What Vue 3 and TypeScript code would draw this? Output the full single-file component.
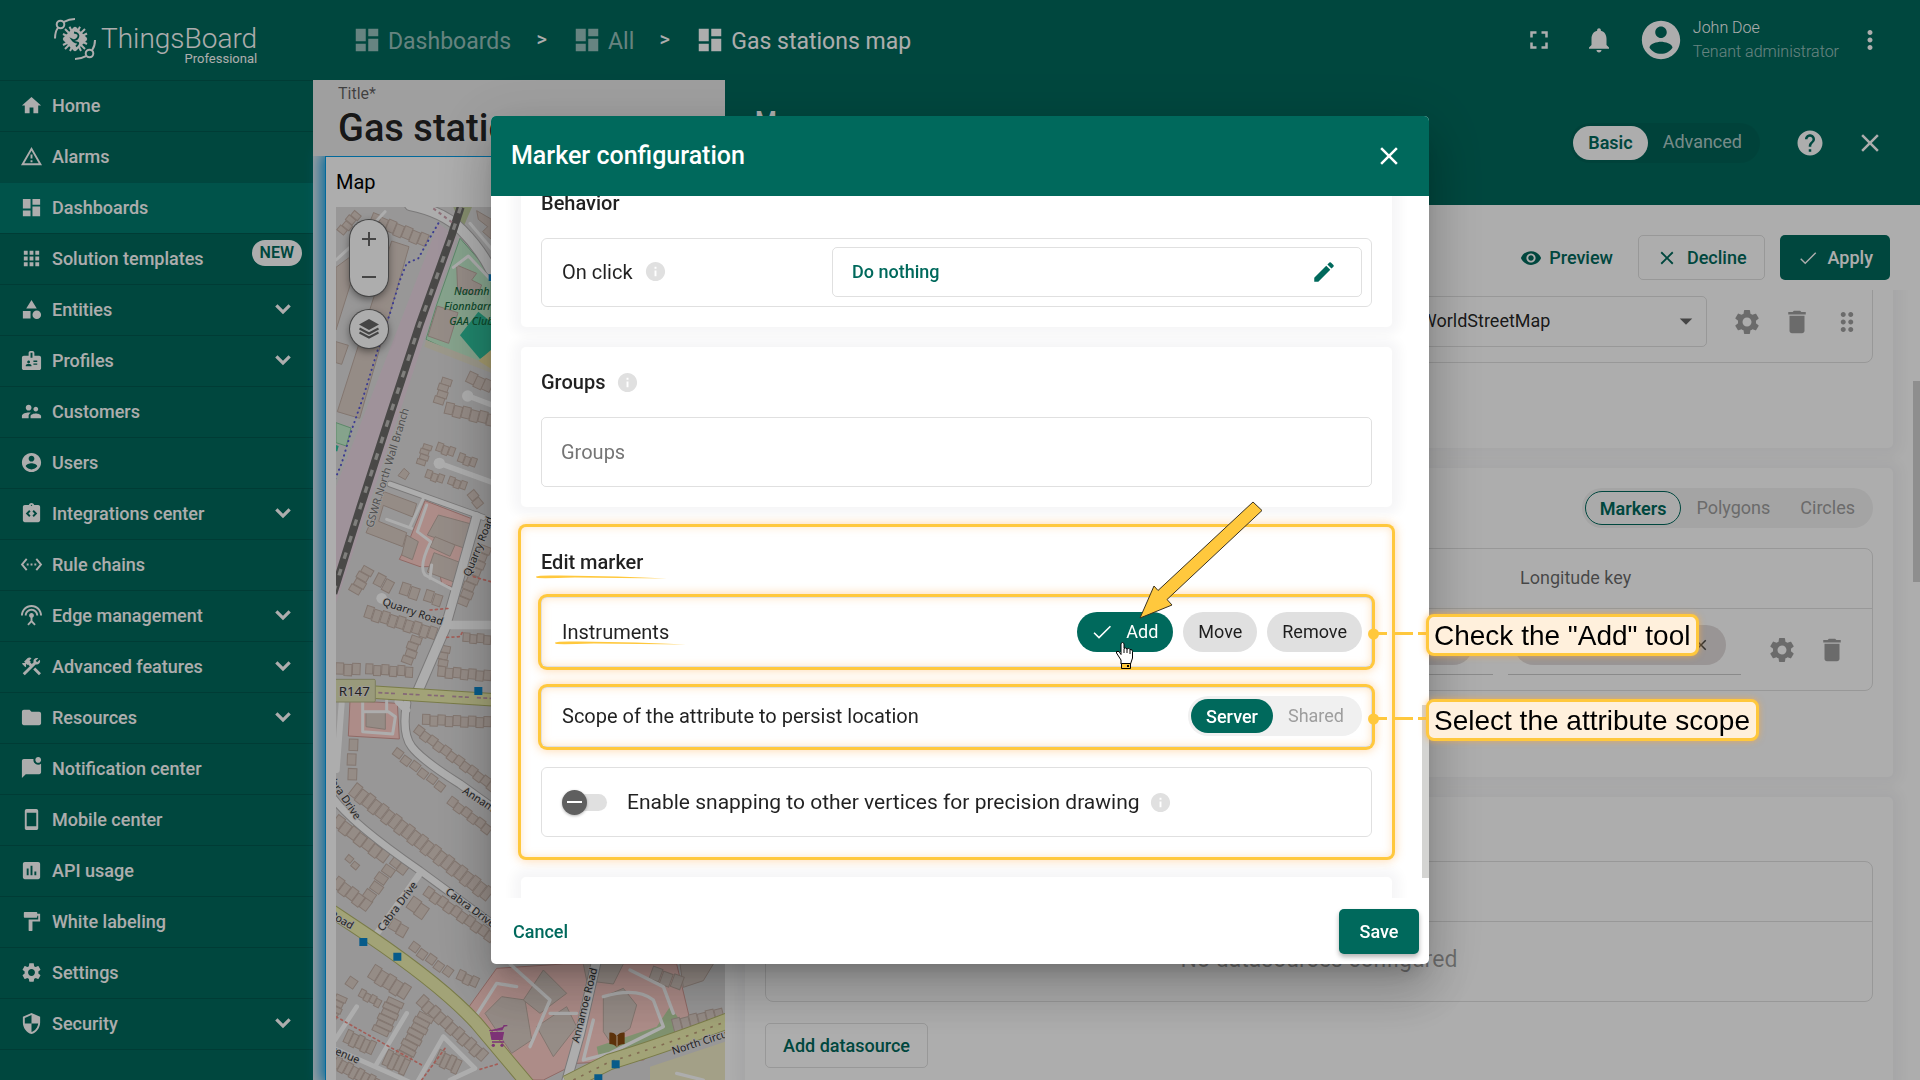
<script setup lang="ts">
import { ref } from 'vue'

interface MenuItem {
  label: string
  icon: string
  expandable?: boolean
  badge?: string
}

interface HouseRow {
  x: number
  y: number
  angle: number
  count: number
  w: number
  h: number
  gap: number
}

const icons: Record<string, string> = {
  home: 'M10 20v-6h4v6h5v-8h3L12 3 2 12h3v8z',
  alarm: 'M12 2L1 21h22L12 2zm0 3.99L19.53 19H4.47L12 5.99zM13 16h-2v2h2v-2zm0-6h-2v4h2v-4z',
  dashboard: 'M3 13h8V3H3v10zm0 8h8v-6H3v6zm10 0h8V11h-8v10zm0-18v6h8V3h-8z',
  apps: 'M4 8h4V4H4v4zm6 12h4v-4h-4v4zm-6 0h4v-4H4v4zm0-6h4v-4H4v4zm6 0h4v-4h-4v4zm6-10v4h4V4h-4zm-6 4h4V4h-4v4zm6 6h4v-4h-4v4zm0 6h4v-4h-4v4z',
  category: 'M12 2l-5.5 9h11zM17.5 13a4.5 4.5 0 1 0 0 9 4.5 4.5 0 0 0 0-9zM3 13.5h8v8H3z',
  badge: 'M20 7h-5V4c0-1.1-.9-2-2-2h-2c-1.1 0-2 .9-2 2v3H4c-1.1 0-2 .9-2 2v11c0 1.1.9 2 2 2h16c1.1 0 2-.9 2-2V9c0-1.1-.9-2-2-2zM9 12c.83 0 1.5.67 1.5 1.5S9.83 15 9 15s-1.5-.67-1.5-1.5S8.17 12 9 12zm3 6H6v-.75c0-1 2-1.5 3-1.5s3 .5 3 1.5V18zm1-9h-2V4h2v5zm5 7.5h-4V15h4v1.5zm0-3h-4V12h4v1.5z',
  customers: 'M16.5 12c1.38 0 2.49-1.12 2.49-2.5S17.88 7 16.5 7C15.12 7 14 8.12 14 9.5s1.12 2.5 2.5 2.5zM9 11c1.66 0 2.99-1.34 2.99-3S10.66 5 9 5C7.34 5 6 6.34 6 8s1.34 3 3 3zm7.5 3c-1.83 0-5.5.92-5.5 2.75V19h11v-2.25c0-1.83-3.67-2.75-5.5-2.75zM9 13c-2.33 0-7 1.17-7 3.5V19h7v-2.25c0-.85.33-2.34 2.37-3.47C10.5 13.1 9.66 13 9 13z',
  account: 'M12 2C6.48 2 2 6.48 2 12s4.48 10 10 10 10-4.48 10-10S17.52 2 12 2zm0 3c1.66 0 3 1.34 3 3s-1.34 3-3 3-3-1.34-3-3 1.34-3 3-3zm0 14.2c-2.5 0-4.71-1.28-6-3.22.03-1.99 4-3.08 6-3.08 1.99 0 5.97 1.09 6 3.08-1.29 1.94-3.5 3.22-6 3.22z',
  integrations: 'M19 3h-4.18C14.4 1.84 13.3 1 12 1s-2.4.84-2.82 2H5c-1.1 0-2 .9-2 2v14c0 1.1.9 2 2 2h14c1.1 0 2-.9 2-2V5c0-1.1-.9-2-2-2zm-8 11.17-1.41 1.42L6 12l3.59-3.59L11 9.83 8.83 12 11 14.17zm1-9.92c-.41 0-.75-.34-.75-.75s.34-.75.75-.75.75.34.75.75-.34.75-.75.75zm2.41 11.34L13 14.17 15.17 12 13 9.83l1.41-1.42L18 12l-3.59 3.59z',
  rules: 'M7.77 6.76L6.23 5.48.82 12l5.41 6.52 1.54-1.28L3.42 12l4.35-5.24zM7 13h2v-2H7v2zm10-2h-2v2h2v-2zm-6 2h2v-2h-2v2zm6.77-7.52l-1.54 1.28L20.58 12l-4.35 5.24 1.54 1.28L23.18 12l-5.41-6.52z',
  antenna: 'M12 5c-3.87 0-7 3.13-7 7h2c0-2.76 2.24-5 5-5s5 2.24 5 5h2c0-3.87-3.13-7-7-7zm1 9.29c.88-.39 1.5-1.26 1.5-2.29 0-1.38-1.12-2.5-2.5-2.5S9.5 10.62 9.5 12c0 1.02.62 1.9 1.5 2.29v3.3L7.59 21 9 22.41l3-3 3 3L16.41 21 13 17.59v-3.3zM12 1C5.93 1 1 5.93 1 12h2c0-4.97 4.03-9 9-9s9 4.03 9 9h2c0-6.07-4.93-11-11-11z',
  tools: 'M13.78 15.17l2.12-2.12 6 6-2.12 2.12zM17.5 10c1.93 0 3.5-1.57 3.5-3.5 0-.58-.16-1.12-.41-1.6l-2.7 2.7-1.49-1.49 2.7-2.7c-.48-.25-1.02-.41-1.6-.41C15.57 3 14 4.57 14 6.5c0 .41.08.8.21 1.16l-1.85 1.85-1.78-1.78.71-.71-1.41-1.41L12 3.49c-1.17-1.17-3.07-1.17-4.24 0L4.22 7.03l1.41 1.41H2.81l-.71.71 3.54 3.54.71-.71V9.15l1.41 1.41.71-.71 1.78 1.78-7.41 7.41 2.12 2.12L16.34 9.79c.36.13.75.21 1.16.21z',
  folder: 'M10 4H4c-1.1 0-1.99.9-1.99 2L2 18c0 1.1.9 2 2 2h16c1.1 0 2-.9 2-2V8c0-1.1-.9-2-2-2h-8l-2-2z',
  notification: 'M22 6.98V16c0 1.1-.9 2-2 2H6l-4 4V4c0-1.1.9-2 2-2h10.1c-.06.32-.1.66-.1 1 0 2.76 2.24 5 5 5 1.13 0 2.16-.39 3-1.02zM16 3c0 1.66 1.34 3 3 3s3-1.34 3-3-1.34-3-3-3-3 1.34-3 3z',
  mobile: 'M17 1.01L7 1c-1.1 0-1.99.9-1.99 2v18c0 1.1.89 2 1.99 2h10c1.1 0 2-.9 2-2V3c0-1.1-.9-1.99-2-1.99zM17 19H7V5h10v14z',
  chart: 'M19 3H5c-1.1 0-2 .9-2 2v14c0 1.1.9 2 2 2h14c1.1 0 2-.9 2-2V5c0-1.1-.9-2-2-2zM9 17H7v-7h2v7zm4 0h-2V7h2v10zm4 0h-2v-4h2v4z',
  paint: 'M18 4V3c0-.55-.45-1-1-1H5c-.55 0-1 .45-1 1v4c0 .55.45 1 1 1h12c.55 0 1-.45 1-1V6h1v4H9v11c0 .55.45 1 1 1h2c.55 0 1-.45 1-1v-9h8V4h-3z',
  settings: 'M19.14 12.94c.04-.3.06-.61.06-.94 0-.32-.02-.64-.07-.94l2.03-1.58c.18-.14.23-.41.12-.61l-1.92-3.32c-.12-.22-.37-.29-.59-.22l-2.39.96c-.5-.38-1.03-.7-1.62-.94l-.36-2.54c-.04-.24-.24-.41-.48-.41h-3.84c-.24 0-.43.17-.47.41l-.36 2.54c-.59.24-1.13.57-1.62.94l-2.39-.96c-.22-.08-.47 0-.59.22L2.74 8.87c-.12.21-.08.47.12.61l2.03 1.58c-.05.3-.09.63-.09.94s.02.64.07.94l-2.03 1.58c-.18.14-.23.41-.12.61l1.92 3.32c.12.22.37.29.59.22l2.39-.96c.5.38 1.03.7 1.62.94l.36 2.54c.05.24.24.41.48.41h3.84c.24 0 .44-.17.47-.41l.36-2.54c.59-.24 1.13-.56 1.62-.94l2.39.96c.22.08.47 0 .59-.22l1.92-3.32c.12-.22.07-.47-.12-.61l-2.01-1.58zM12 15.6c-1.98 0-3.6-1.62-3.6-3.6s1.62-3.6 3.6-3.6 3.6 1.62 3.6 3.6-1.62 3.6-3.6 3.6z',
  shield: 'M12 1L3 5v6c0 5.55 3.84 10.74 9 12 5.16-1.26 9-6.45 9-12V5l-9-4zm0 10.99h7c-.53 4.12-3.28 7.79-7 8.94V12H5V6.3l7-3.11v8.8z',
  fullscreen: 'M7 14H5v5h5v-2H7v-3zm-2-4h2V7h3V5H5v5zm12 7h-3v2h5v-5h-2v3zM14 5v2h3v3h2V5h-5z',
  bell: 'M12 22c1.1 0 2-.9 2-2h-4c0 1.1.89 2 2 2zm6-6v-5c0-3.07-1.64-5.64-4.5-6.32V4c0-.83-.67-1.5-1.5-1.5s-1.5.67-1.5 1.5v.68C7.63 5.36 6 7.92 6 11v5l-2 2v1h16v-1l-2-2z',
  more: 'M12 8c1.1 0 2-.9 2-2s-.9-2-2-2-2 .9-2 2 .9 2 2 2zm0 2c-1.1 0-2 .9-2 2s.9 2 2 2 2-.9 2-2-.9-2-2-2zm0 6c-1.1 0-2 .9-2 2s.9 2 2 2 2-.9 2-2-.9-2-2-2z',
  help: 'M12 2C6.48 2 2 6.48 2 12s4.48 10 10 10 10-4.48 10-10S17.52 2 12 2zm1 17h-2v-2h2v2zm2.07-7.75l-.9.92C13.45 12.9 13 13.5 13 15h-2v-.5c0-1.1.45-2.1 1.17-2.83l1.24-1.26c.37-.36.59-.86.59-1.41 0-1.1-.9-2-2-2s-2 .9-2 2H8c0-2.21 1.79-4 4-4s4 1.79 4 4c0 .88-.36 1.68-.93 2.25z',
  close: 'M19 6.41L17.59 5 12 10.59 6.41 5 5 6.41 10.59 12 5 17.59 6.41 19 12 13.41 17.59 19 19 17.59 13.41 12z',
  eye: 'M12 4.5C7 4.5 2.73 7.61 1 12c1.73 4.39 6 7.5 11 7.5s9.27-3.11 11-7.5c-1.73-4.39-6-7.5-11-7.5zM12 17c-2.76 0-5-2.24-5-5s2.24-5 5-5 5 2.24 5 5-2.24 5-5 5zm0-8c-1.66 0-3 1.34-3 3s1.34 3 3 3 3-1.34 3-3-1.34-3-3-3z',
  check: 'M9 16.6L4.6 12.2l-1.1 1.1L9 18.8 21 6.800l-1.100-1.100z',
  trash: 'M6 19c0 1.1.9 2 2 2h8c1.1 0 2-.9 2-2V7H6v12zM19 4h-3.5l-1-1h-5l-1 1H5v2h14V4z',
  drag: 'M11 18c0 1.1-.9 2-2 2s-2-.9-2-2 .9-2 2-2 2 .9 2 2zm-2-8c-1.1 0-2 .9-2 2s.9 2 2 2 2-.9 2-2-.9-2-2-2zm0-6c-1.1 0-2 .9-2 2s.9 2 2 2 2-.9 2-2-.9-2-2-2zm6 4c1.1 0 2-.9 2-2s-.9-2-2-2-2 .9-2 2 .9 2 2 2zm0 2c-1.1 0-2 .9-2 2s.9 2 2 2 2-.9 2-2-.9-2-2-2zm0 6c-1.1 0-2 .9-2 2s.9 2 2 2 2-.9 2-2-.9-2-2-2z',
  edit: 'M3 17.25V21h3.75L17.81 9.94l-3.75-3.75L3 17.25zM20.71 7.04a.996.996 0 0 0 0-1.41l-2.34-2.34a.996.996 0 0 0-1.41 0l-1.83 1.83 3.75 3.75 1.83-1.83z',
  info: 'M12 2C6.48 2 2 6.48 2 12s4.48 10 10 10 10-4.48 10-10S17.52 2 12 2zm1 15h-2v-6h2v6zm0-8h-2V7h2v2z',
  chevron: 'M3.5 9.2L6 6.7l6 6 6-6 2.5 2.5L12 17.7z',
  arrow: 'M7 10l5 5 5-5z',
}

const menu: MenuItem[] = [
  { label: 'Home', icon: 'home' },
  { label: 'Alarms', icon: 'alarm' },
  { label: 'Dashboards', icon: 'dashboard' },
  { label: 'Solution templates', icon: 'apps', badge: 'NEW' },
  { label: 'Entities', icon: 'category', expandable: true },
  { label: 'Profiles', icon: 'badge', expandable: true },
  { label: 'Customers', icon: 'customers' },
  { label: 'Users', icon: 'account' },
  { label: 'Integrations center', icon: 'integrations', expandable: true },
  { label: 'Rule chains', icon: 'rules' },
  { label: 'Edge management', icon: 'antenna', expandable: true },
  { label: 'Advanced features', icon: 'tools', expandable: true },
  { label: 'Resources', icon: 'folder', expandable: true },
  { label: 'Notification center', icon: 'notification' },
  { label: 'Mobile center', icon: 'mobile' },
  { label: 'API usage', icon: 'chart' },
  { label: 'White labeling', icon: 'paint' },
  { label: 'Settings', icon: 'settings' },
  { label: 'Security', icon: 'shield', expandable: true },
]

const crumbs = ['Dashboards', 'All', 'Gas stations map']
const current = 'Dashboards'

const title = ref('Gas stations map')
const layer = ref('Esri.WorldStreetMap')
const groups = ref('')
const mode = ref('Basic')
const overlay = ref('Markers')
const scope = ref('Server')
const tools = ref(['Add'])
const snapping = ref(false)

function toggleTool(tool: string) {
  tools.value = tools.value.includes(tool)
    ? tools.value.filter((t) => t !== tool)
    : [...tools.value, tool]
}

// Terraced houses along the streets of the map
const houseRows: HouseRow[] = [
  { x: 190, y: 100, angle: 22, count: 7, w: 24, h: 36, gap: 2 },
  { x: 82, y: 150, angle: -50, count: 4, w: 18, h: 26, gap: 2 },
  { x: 480, y: 575, angle: 25, count: 3, w: 26, h: 34, gap: 0 },
  { x: 425, y: 600, angle: 108, count: 4, w: 20, h: 30, gap: 0 },
  { x: 410, y: 668, angle: 14, count: 6, w: 24, h: 34, gap: 2 },
  { x: 385, y: 788, angle: 20, count: 3, w: 17, h: 26, gap: 2 },
  { x: 450, y: 820, angle: 20, count: 3, w: 17, h: 26, gap: 2 },
  { x: 365, y: 798, angle: 108, count: 4, w: 15, h: 26, gap: 1 },
  { x: 352, y: 870, angle: 20, count: 3, w: 17, h: 24, gap: 2 },
  { x: 420, y: 890, angle: 20, count: 3, w: 17, h: 24, gap: 2 },
  { x: 490, y: 930, angle: 50, count: 2, w: 24, h: 26, gap: 2 },
  { x: 190, y: 1172, angle: 120, count: 4, w: 20, h: 34, gap: 2 },
  { x: 205, y: 1180, angle: 28, count: 2, w: 26, h: 36, gap: 4 },
  { x: 278, y: 1208, angle: 18, count: 2, w: 26, h: 36, gap: 4 },
  { x: 350, y: 1230, angle: 18, count: 2, w: 24, h: 34, gap: 4 },
  { x: 172, y: 1278, angle: 18, count: 9, w: 22, h: 36, gap: 3 },
  { x: 543, y: 1105, angle: 112, count: 8, w: 22, h: 34, gap: 2 },
  { x: 335, y: 1375, angle: 110, count: 4, w: 20, h: 32, gap: 2 },
  { x: 78, y: 1450, angle: 2, count: 3, w: 23, h: 34, gap: 2 },
  { x: 168, y: 1453, angle: 3, count: 6, w: 21, h: 30, gap: 3 },
  { x: 385, y: 1460, angle: 5, count: 7, w: 22, h: 30, gap: 1 },
  { x: 420, y: 1400, angle: 100, count: 3, w: 20, h: 28, gap: 1 },
  { x: 460, y: 1360, angle: 4, count: 4, w: 20, h: 26, gap: 1 },
  { x: 338, y: 1605, angle: 2, count: 9, w: 22, h: 30, gap: 1 },
  { x: 325, y: 1636, angle: 37, count: 12, w: 24, h: 26, gap: 1 },
  { x: 142, y: 1678, angle: 92, count: 3, w: 34, h: 26, gap: 10 },
  { x: 260, y: 1704, angle: 37, count: 6, w: 26, h: 24, gap: 6 },
  { x: 425, y: 1850, angle: 37, count: 6, w: 24, h: 26, gap: 2 },
  { x: 140, y: 1810, angle: 38, count: 21, w: 22, h: 42, gap: 3 },
  { x: 85, y: 1905, angle: 37, count: 7, w: 26, h: 36, gap: 2 },
  { x: 255, y: 2028, angle: 37, count: 2, w: 26, h: 30, gap: 2 },
  { x: 85, y: 2090, angle: 37, count: 5, w: 24, h: 36, gap: 2 },
  { x: 255, y: 2070, angle: 125, count: 4, w: 26, h: 34, gap: 5 },
  { x: 115, y: 2025, angle: 40, count: 2, w: 20, h: 18, gap: 6 },
  { x: 310, y: 2150, angle: 35, count: 2, w: 30, h: 40, gap: 0 },
  { x: 355, y: 2120, angle: 35, count: 10, w: 23, h: 30, gap: 2 },
  { x: 250, y: 2215, angle: 30, count: 2, w: 26, h: 34, gap: 2 },
  { x: 310, y: 2285, angle: 36, count: 5, w: 25, h: 26, gap: 6 },
  { x: 450, y: 2370, angle: 25, count: 3, w: 20, h: 30, gap: 2 },
  { x: 195, y: 2355, angle: 32, count: 5, w: 24, h: 44, gap: 2 },
  { x: 340, y: 2445, angle: 42, count: 11, w: 22, h: 34, gap: 2 },
  { x: 120, y: 2390, angle: 35, count: 1, w: 28, h: 28, gap: 2 },
  { x: 155, y: 2428, angle: 28, count: 4, w: 16, h: 24, gap: 2 },
  { x: 280, y: 2470, angle: 115, count: 6, w: 17, h: 50, gap: 2 },
  { x: 370, y: 2515, angle: 118, count: 8, w: 17, h: 48, gap: 2 },
  { x: 115, y: 2550, angle: 25, count: 5, w: 17, h: 40, gap: 2 },
  { x: 82, y: 2630, angle: 28, count: 8, w: 17, h: 36, gap: 2 },
  { x: 235, y: 2610, angle: 25, count: 4, w: 17, h: 48, gap: 2 },
  { x: 390, y: 2610, angle: 25, count: 4, w: 17, h: 44, gap: 2 },
  { x: 110, y: 2455, angle: 115, count: 4, w: 16, h: 34, gap: 2 },
  { x: 1085, y: 2520, angle: -14, count: 6, w: 24, h: 44, gap: 2 },
  { x: 1030, y: 2360, angle: 20, count: 3, w: 30, h: 40, gap: 4 },
]

const houses = houseRows.flatMap((row) =>
  Array.from({ length: row.count }, (_, i) => ({
    key: `${row.x}-${row.y}-${i}`,
    x: i * (row.w + row.gap),
    y: i % 2 ? 2 : -2,
    w: row.w,
    h: row.h,
    transform: `translate(${row.x} ${row.y}) rotate(${row.angle})`,
  })),
)
</script>

<template>
  <div class="app">
    <header class="topbar">
      <a class="logo" href="#" aria-label="ThingsBoard Professional">
        <svg class="logo-mark" viewBox="0 0 42 42" fill="none" stroke="#fff" aria-hidden="true">
          <g class="outline-only" stroke-width="2">
            <circle cx="6.5" cy="6.5" r="3.8" />
            <path d="M10 3.8Q15 1 21 1M3.8 10Q1 14 1 20.500" />
            <circle cx="35.500" cy="35.500" r="3.8" />
            <path d="M32 38.200Q27 41 21 41M38.200 32Q41 28 41 22" />
          </g>
          <path stroke-width="2" d="M11 11l4 4M31 11l-4 4M11 31l4-4M31 31l-4-4M15.500 8.800l2 4M26 8.800l-2 4M33 15.500l-4 2M33 26l-4-2M9 16l4 2M9 27l4-2M16 33l2-4M27 33l-2-4" />
          <path stroke="none" d="M19.500 9.500q1.500-1.500 3 0l10 10q1.500 1.500 0 3l-10 10q-1.500 1.500-3 0l-10-10q-1.500-1.500 0-3z" />
          <path class="outline-only" stroke="#00695c" stroke-width="1.800" d="M20 14.500q6 1 4 5t-6 2q2 3 5 3t-1 4" />
        </svg>
        <span class="logo-text"><b>ThingsBoard</b><small>Professional</small></span>
      </a>
      <nav class="crumbs" aria-label="Breadcrumb">
        <template v-for="(crumb, i) in crumbs" :key="crumb">
          <a href="#" :class="['crumb', { last: i === crumbs.length - 1 }]">
            <svg class="i30" viewBox="0 0 24 24"><path :d="icons.dashboard" /></svg>
            <span>{{ crumb }}</span>
          </a>
          <span v-if="i < crumbs.length - 1" class="sep">&gt;</span>
        </template>
      </nav>
      <div class="top-actions">
        <button class="icon-btn" aria-label="Fullscreen"><svg class="i30" viewBox="0 0 24 24"><path :d="icons.fullscreen" /></svg></button>
        <button class="icon-btn" aria-label="Notifications"><svg class="i30" viewBox="0 0 24 24"><path :d="icons.bell" /></svg></button>
        <div class="user">
          <svg class="avatar" viewBox="0 0 24 24"><path :d="icons.account" /></svg>
          <div class="user-text"><span>John Doe</span><span class="role">Tenant administrator</span></div>
        </div>
        <button class="icon-btn" aria-label="Menu"><svg class="i30" viewBox="0 0 24 24"><path :d="icons.more" /></svg></button>
      </div>
    </header>

    <nav class="sidebar" aria-label="Main">
      <a v-for="item in menu" :key="item.label" href="#" :class="['item', { active: item.label === current }]">
        <svg class="item-icon" viewBox="0 0 24 24"><path :d="icons[item.icon]" /></svg>
        <span class="item-label">{{ item.label }}</span>
        <span v-if="item.badge" class="new">{{ item.badge }}</span>
        <svg v-if="item.expandable" class="item-chevron" viewBox="0 0 24 24"><path :d="icons.chevron" /></svg>
      </a>
    </nav>

    <main class="dashboard">
      <div class="title-bar">
        <label for="dash-title">Title*</label>
        <input id="dash-title" v-model="title" type="text" />
      </div>
      <section class="widget">
        <h2>Map</h2>
        <div class="map">
          <svg class="map-art" viewBox="78 81 1167 2619" preserveAspectRatio="xMinYMin slice" aria-hidden="true">
            <rect x="78" y="81" width="1167" height="2619" fill="#e0dfdf" />
            <path d="M385 130L440 170 335 500 78 1270V920L250 480z" fill="#ebd8e4" />
            <path d="M430 81h56l-30 70z" fill="#c3cfa0" />
            <path d="M450 175L543 280V572L348 478 380 375z" fill="#c5f0cf" stroke="#86c99a" stroke-width="3" />
            <path d="M348 480L543 556v22L343 500z" fill="#e5e0cc" />
            <path d="M505 395L543 425V515L510 537 450 466z" fill="#2fc49f" />
            <path d="M543 510l-38 32 38 24z" fill="#f0e2a0" />
            <path d="M78 728l45 16-14 54-31-10z" fill="#c5f0cf" stroke="#86c99a" stroke-width="3" />
            <path d="M78 795l8 3-4 16h-4z" fill="#2fc49f" />
            <g fill="#ffcfc9" stroke="#d59c96" stroke-width="3">
              <path d="M345 962L508 1025 440 1225 395 1210 385 1160 330 1160 268 1138 300 1075z" />
              <path d="M120 1562L262 1570 268 1677 115 1668z" />
              <path d="M470 2490L560 2365 760 2352H1100L1140 2520 1000 2640 800 2650 700 2700H640z" />
            </g>
            <g fill="#dccec6" stroke="#c1afa5" stroke-width="3">
              <path d="M245 183l52 17-148 515-67-20z" />
              <path d="M155 205L78 262V450z" />
              <path d="M78 485l37 11-20 57-17-5z" />
              <path d="M440 255l60 25-15 20 30 15-12 30-60-12z" />
              <path d="M382 378l62 20-28 92-62-22z" />
              <path d="M500 92l43 25v60l-25-22 15-15-28-22z" />
              <path d="M282 865l16 14-12 20-22-12z" />
              <path d="M222 935l98 36-12 40-88-35-14 48 84 34-12 42-110-42z" />
              <path d="M385 1005l110 30-25 72-118-42z" />
              <path d="M290 1065l35 20-18 54-32-14z" />
              <path d="M375 1070l60 25-15 34-60-28z" />
              <path d="M372 1118l80 30-20 58-80-30z" />
              <path d="M168 1598h58v50l-58-8z" />
              <path d="M525 2500l50-50 70 10 20 120-60 40z" />
              <path d="M700 2370l70 70-80 60-50-40z" />
              <path d="M680 2540l90-60 30 60-70 90z" />
              <path d="M880 2450l60-25 40 50-20 70-60 40-20-30z" />
              <path d="M820 2352h120l-30 60-80-10z" />
              <path d="M1110 2352h100l-30 50-60 20z" />
            </g>
            <path d="M1020 2660l225-75v115h-225z" fill="#f0ecc8" />
            <path d="M860 2600l180-60 40-60 30 40-30 60-210 70z" fill="#bcd8a4" />
            <g fill="#dccec6" stroke="#c1afa5" stroke-width="3">
              <rect v-for="h in houses" :key="h.key" :x="h.x" :y="h.y" :width="h.w" :height="h.h" :transform="h.transform" />
            </g>
            <g class="outline-only" stroke-linecap="round" stroke-linejoin="round">
              <g stroke="#b5b3b3">
                <path d="M300 75Q400 95 455 150T543 270" stroke-width="36" />
                <path d="M240 912L520 1012" stroke-width="20" />
                <path d="M500 1010L405 1345" stroke-width="32" />
                <path d="M405 1345L325 1530" stroke-width="34" />
                <path d="M290 1570Q275 1660 305 1700T450 1812L600 1920" stroke-width="28" />
                <path d="M60 1840Q110 1920 330 2072L600 2270" stroke-width="26" />
                <path d="M860 2340L810 2560 765 2720" stroke-width="32" />
              </g>
              <g stroke="#fff">
                <path d="M300 75Q400 95 455 150T543 270" stroke-width="30" />
                <path d="M240 912L520 1012" stroke-width="15" />
                <path d="M500 1010L405 1345M405 1335h138" stroke-width="26" />
                <path d="M405 1345L325 1530" stroke-width="28" />
                <path d="M265 1565L290 1590M290 1570Q275 1660 305 1700T450 1812L600 1920" stroke-width="22" />
                <path d="M60 1840Q110 1920 330 2072L600 2270M330 2080L190 2275" stroke-width="20" />
                <path d="M95 1570L80 1770" stroke-width="18" />
                <path d="M475 648L560 680M388 850L560 912M215 1255L240 1265" stroke-width="16" />
                <path d="M78 240L160 165 225 95M480 130L560 225M430 262L475 228 543 300M230 1018L305 1045" stroke-width="9" />
                <path d="M350 975L322 1055 362 1085Q325 1160 345 1185L430 1230M365 1155L360 1195M340 955L300 1040" stroke-width="9" />
                <path d="M158 1565V1655L248 1662 256 1610 235 1595H160M230 1560V1595" stroke-width="9" />
                <path d="M140 2480L75 2580M290 2500L195 2660M60 2600L330 2720M400 2570L320 2710M400 2570L495 2665 420 2700" stroke-width="14" />
                <path d="M490 2520L560 2410 620 2420M600 2352L720 2460 660 2600M720 2500L800 2500M880 2450Q980 2420 1030 2460L1060 2540 900 2620 820 2640 850 2520M960 2370L1060 2420 1090 2500M1100 2680l80 20" stroke-width="10" />
                <path d="M860 2340L810 2560 765 2720" stroke-width="26" />
              </g>
              <g stroke-linecap="butt">
                <path d="M60 1528L560 1560" stroke="#b3b66b" stroke-width="40" />
                <path d="M60 1528L560 1560" stroke="#eff0b0" stroke-width="34" />
                <path d="M205 1538L560 1556" stroke="#c49ab0" stroke-width="5" stroke-dasharray="12 7 12 7 12 24" />
                <path d="M60 2190L180 2270Q400 2420 500 2530L660 2720" stroke="#b3b66b" stroke-width="42" />
                <path d="M60 2190L180 2270Q400 2420 500 2530L660 2720" stroke="#eff0b0" stroke-width="36" />
                <path d="M770 2710L900 2645Q1050 2600 1260 2520" stroke="#b3b66b" stroke-width="50" />
                <path d="M770 2710L900 2645Q1050 2600 1260 2520" stroke="#eff0b0" stroke-width="44" />
                <path d="M790 2700L900 2645Q1050 2600 1260 2520" stroke="#c0a07a" stroke-width="5" stroke-dasharray="8 18" />
                <path d="M452 81L425 165 330 430 240 705 150 985 70 1240" stroke="#6c6b69" stroke-width="24" />
                <path d="M452 81L425 165 330 430 240 705 150 985 70 1240" stroke="#bdbbb8" stroke-width="10" stroke-dasharray="20 32" />
                <path d="M370 85L430 130" stroke="#d3a8b4" stroke-width="6" stroke-dasharray="10 10" />
              </g>
              <path d="M385 130L350 190 325 235 290 250 270 300 240 400 200 520 160 650 125 750 95 850 70 910" stroke="#5b5bd6" stroke-width="6" stroke-dasharray="1 14" />
              <path d="M490 1190L560 1210M360 1290L420 1285M410 1372l40-2 10-20M78 2510L335 2655M405 2605L335 2700M510 2668L570 2650" stroke="#f08a80" stroke-width="5" stroke-dasharray="6 10" />
            </g>
            <g fill="#fff"><circle cx="473" cy="648" r="17" /><circle cx="388" cy="850" r="17" /><circle cx="215" cy="1255" r="16" /></g>
            <path d="M493 1521h24v24h-24zM148 2274h24v24h-24zM250 2318h24v24h-24zM905 2641h24v24h-24zM853 2683h24v24h-24zM536 283h10v20h-10z" fill="#0b87cc" />
            <path d="M538 2552l38-3 6-12h10M542 2558h38l-4 20h-30zM546 2586h36" fill="#b84cae" stroke="#b84cae" stroke-width="4" />
            <circle cx="550" cy="2596" r="5" fill="#b84cae" /><circle cx="576" cy="2596" r="5" fill="#b84cae" />
            <path d="M898 2558q14-2 22 10 10-12 24-10v34q-14 0-24 10-8-10-22-10z" fill="#8a4a10" />
            <path d="M921 2568v32" stroke="#dcb890" stroke-width="4" />
            <rect x="70" y="1498" width="126" height="68" rx="4" fill="#e2e3b6" stroke="#b9ba8c" stroke-width="3" />
            <g class="map-text">
              <text x="86" y="1548" font-size="40">R147</text>
              <g class="club">
                <text x="432" y="346">Naomh</text>
                <text x="402" y="390">Fionnbarra</text>
                <text x="418" y="434">GAA Club</text>
              </g>
              <text class="rail" transform="translate(188 1045) rotate(-73)">GSWR North Wall Branch</text>
              <text transform="translate(480 1192) rotate(-68)">Quarry Road</text>
              <text transform="translate(215 1274) rotate(19)">Quarry Road</text>
              <text transform="translate(455 1838) rotate(33)">Annamoe Road</text>
              <text transform="translate(38 1775) rotate(56)">Cabra Drive</text>
              <text transform="translate(218 2256) rotate(-53)">Cabra Drive</text>
              <text transform="translate(404 2140) rotate(36)">Cabra Drive</text>
              <text transform="translate(56 2210) rotate(30)">Road</text>
              <text transform="translate(40 2608) rotate(23)">Avenue</text>
              <text transform="translate(806 2590) rotate(-76)">Annamoe Road</text>
              <text transform="translate(1090 2624) rotate(-18)">North Circular</text>
            </g>
          </svg>
          <div class="map-controls">
            <div class="zoom">
              <button aria-label="Zoom in"><svg viewBox="0 0 16 16"><path d="M8 1v14M1 8h14" /></svg></button>
              <button aria-label="Zoom out"><svg viewBox="0 0 16 16"><path d="M1 8h14" /></svg></button>
            </div>
            <button class="layers" aria-label="Layers">
              <svg viewBox="0 0 22 20">
                <path d="M11 0l10 5.500-10 5.500L1 5.500z" />
                <path class="outline-only" stroke="currentColor" stroke-width="2" d="M1.500 9.500L11 14.500l9.500-5M1.500 13.500L11 18.500l9.500-5" />
              </svg>
            </button>
          </div>
        </div>
      </section>
    </main>

    <aside class="drawer">
      <div class="drawer-head">
        <h2>Map</h2>
        <div class="segmented dark">
          <button v-for="m in ['Basic', 'Advanced']" :key="m" :class="{ on: mode === m }" @click="mode = m">{{ m }}</button>
        </div>
        <button class="icon-btn" aria-label="Help"><svg class="i30" viewBox="0 0 24 24"><path :d="icons.help" /></svg></button>
        <button class="icon-btn" aria-label="Close"><svg class="i30" viewBox="0 0 24 24"><path :d="icons.close" /></svg></button>
      </div>
      <div class="drawer-tools">
        <button class="btn plain"><svg class="i22" viewBox="0 0 24 24"><path :d="icons.eye" /></svg>Preview</button>
        <button class="btn outline"><svg class="i22" viewBox="0 0 24 24"><path :d="icons.close" /></svg>Decline</button>
        <button class="btn filled"><svg class="i22" viewBox="0 0 24 24"><path :d="icons.check" /></svg>Apply</button>
      </div>
      <div class="drawer-body">
        <section class="card layers-card">
          <div class="layer-row">
            <div class="select">
              <select v-model="layer" aria-label="Layer"><option>Esri.WorldStreetMap</option></select>
              <svg class="i30" viewBox="0 0 24 24"><path :d="icons.arrow" /></svg>
            </div>
            <button class="icon-btn muted" aria-label="Layer settings"><svg class="i30" viewBox="0 0 24 24"><path :d="icons.settings" /></svg></button>
            <button class="icon-btn muted" aria-label="Remove layer"><svg class="i30" viewBox="0 0 24 24"><path :d="icons.trash" /></svg></button>
            <button class="icon-btn muted" aria-label="Drag layer"><svg class="i30" viewBox="0 0 24 24"><path :d="icons.drag" /></svg></button>
          </div>
        </section>
        <section class="card overlays-card">
          <div class="segmented light">
            <button v-for="o in ['Markers', 'Polygons', 'Circles']" :key="o" :class="{ on: overlay === o }" @click="overlay = o">{{ o }}</button>
          </div>
          <table class="grid-table">
            <colgroup><col /><col class="key-col" /><col class="key-col" /><col class="act-col" /></colgroup>
            <thead><tr><th></th><th></th><th>Longitude key</th><th></th></tr></thead>
            <tbody>
              <tr>
                <td></td>
                <td class="key"><div class="key-field"><span class="key-chip short"></span></div></td>
                <td class="key">
                  <div class="key-field">
                    <span class="key-chip">
                      <button aria-label="Remove key"><svg viewBox="0 0 24 24"><path :d="icons.close" /></svg></button>
                    </span>
                  </div>
                </td>
                <td>
                  <div class="row-actions">
                    <button class="icon-btn muted" aria-label="Edit marker"><svg class="i30" viewBox="0 0 24 24"><path :d="icons.settings" /></svg></button>
                    <button class="icon-btn muted" aria-label="Delete marker"><svg class="i30" viewBox="0 0 24 24"><path :d="icons.trash" /></svg></button>
                  </div>
                </td>
              </tr>
            </tbody>
          </table>
        </section>
        <section class="card sources-card">
          <table class="grid-table">
            <thead><tr><th></th></tr></thead>
            <tbody><tr><td class="empty">No datasources configured</td></tr></tbody>
          </table>
          <button class="btn outline add">Add datasource</button>
        </section>
        <div class="drawer-thumb"></div>
      </div>
    </aside>

    <div class="backdrop">
      <div class="dialog" role="dialog" aria-labelledby="dialog-title">
        <header class="dialog-head">
          <h1 id="dialog-title">Marker configuration</h1>
          <button class="icon-btn" aria-label="Close dialog"><svg class="i30" viewBox="0 0 24 24"><path :d="icons.close" /></svg></button>
        </header>
        <div class="dialog-body">
          <div class="dialog-cards">
            <section class="card">
              <h3>Behavior</h3>
              <div class="row click-row">
                <span class="row-label">On click</span>
                <svg class="info" viewBox="0 0 24 24"><path :d="icons.info" /></svg>
                <button class="action">Do nothing<svg viewBox="0 0 24 24"><path :d="icons.edit" /></svg></button>
              </div>
            </section>
            <section class="card">
              <h3><label for="groups">Groups</label><svg class="info" viewBox="0 0 24 24"><path :d="icons.info" /></svg></h3>
              <input id="groups" v-model="groups" class="groups" type="text" placeholder="Groups" />
            </section>
            <section class="card marked">
              <h3>Edit marker</h3>
              <div class="row marked">
                <span class="row-label">Instruments</span>
                <div class="chips">
                  <button v-for="t in ['Add', 'Move', 'Remove']" :key="t" :class="['chip', { on: tools.includes(t) }]" @click="toggleTool(t)">
                    <svg v-if="tools.includes(t)" viewBox="0 0 24 24"><path :d="icons.check" /></svg>{{ t }}
                  </button>
                </div>
              </div>
              <div class="row scope-row marked">
                <span class="row-label">Scope of the attribute to persist location</span>
                <div class="segmented scope">
                  <button v-for="s in ['Server', 'Shared']" :key="s" :class="{ on: scope === s }" @click="scope = s">{{ s }}</button>
                </div>
              </div>
              <div class="row snap-row">
                <input id="snap" v-model="snapping" type="checkbox" class="switch" role="switch" />
                <label for="snap">Enable snapping to other vertices for precision drawing</label>
                <svg class="info" viewBox="0 0 24 24"><path :d="icons.info" /></svg>
              </div>
            </section>
            <section class="card next"></section>
          </div>
          <div class="dialog-thumb"></div>
        </div>
        <footer class="dialog-foot">
          <button class="btn plain">Cancel</button>
          <button class="btn filled save">Save</button>
        </footer>

        <div class="notes">
          <svg class="notes-art" viewBox="491 116 938 848" aria-hidden="true">
            <g fill="#ffc83d">
              <path d="M536 576.500Q538 575 560 575.500Q620 576 667 578.500Q620 578 575 577.500Q545 578.500 538 578Q536 578 536 576.500z" />
              <path d="M555 642.500Q557 641 579 641.500Q639 642 686 644.500Q639 644 594 643.500Q564 644.500 557 644Q555 644 555 642.500z" />
              <circle cx="1373.500" cy="634" r="5.500" />
              <circle cx="1373.500" cy="719" r="5.500" />
            </g>
            <path d="M1374 633.500h13M1394 633.500h19M1418 633.500h9M1374 718.500h13M1394 718.500h19M1418 718.500h9" stroke="#ffc83d" stroke-width="3" />
            <path d="M1140 618L1154 586 1158 590.500 1253 502 1262 510.500 1167 599.500 1172 605z" fill="#ffc83d" stroke="#3a3222" />
            <g stroke="#000" stroke-linejoin="round">
              <path fill="#fff" d="M1121 664V660L1116.500 653V651.500H1119L1121 654.500V643.500Q1122.500 641.500 1124 643.500V648.500Q1126 647 1127 649Q1129 647.500 1130 649.500Q1132.500 649 1132.500 651.500V658L1130.500 664z" />
              <path fill="none" d="M1124 649v4M1127 649v4M1130 650v4" />
              <path fill="#ffc83d" d="M1121.500 663.500h9v5h-9z" />
            </g>
            <path fill="#000" d="M1127 665h2v2h-2z" />
          </svg>
          <div class="callout first">Check the "Add" tool</div>
          <div class="callout second">Select the attribute scope</div>
        </div>
      </div>
    </div>
  </div>
</template>

<style>
body {
  overflow: hidden;
}
</style>

<style scoped>
* {
  box-sizing: border-box;
}
.app {
  --green: #00695c;
  --mark: #ffc83d;
  display: grid;
  grid-template-columns: 313px minmax(0, 412fr) minmax(0, 1195fr);
  grid-template-rows: 80px minmax(0, 1fr);
  height: 100vh;
  overflow: hidden;
  font-family: Roboto, sans-serif;
  color: rgba(0, 0, 0, 0.87);
}
button,
input,
select {
  font: inherit;
  color: inherit;
  border: 0;
  margin: 0;
  padding: 0;
  background: none;
}
button {
  cursor: pointer;
}
a {
  color: inherit;
  text-decoration: none;
}
h1,
h2,
h3 {
  margin: 0;
  font-weight: 500;
}
svg {
  display: block;
  flex: none;
  fill: currentColor;
}
.outline-only {
  fill: none;
}
.i30 {
  width: 30px;
  height: 30px;
}
.i22 {
  width: 22px;
  height: 22px;
}
.icon-btn {
  display: grid;
  place-items: center;
  width: 50px;
  height: 50px;
}
.muted {
  color: #9e9e9e;
}

/* top bar */
.topbar {
  grid-column: 1 / -1;
  display: flex;
  align-items: center;
  background: var(--green);
  color: #fff;
}
.logo {
  display: flex;
  width: 313px;
  height: 100%;
  padding: 18px 0 0 54px;
  gap: 5px;
}
.logo-mark {
  width: 42px;
  height: 42px;
}
.logo-text {
  display: flex;
  flex-direction: column;
  align-items: flex-end;
}
.logo-text b {
  font-size: 28px;
  font-weight: 300;
  line-height: 36px;
  margin-top: 3px;
}
.logo-text small {
  font-size: 13px;
  line-height: 14px;
  margin-top: -5px;
}
.crumbs {
  display: flex;
  align-items: center;
  flex: 1;
  padding-left: 39px;
}
.crumb {
  display: flex;
  align-items: center;
  gap: 6px;
  font-size: 23px;
  line-height: 30px;
  color: rgba(255, 255, 255, 0.6);
}
.crumb span {
  padding-top: 4px;
}
.crumb.last {
  color: #fff;
}
.sep {
  font-size: 20px;
  font-weight: 500;
  line-height: 24px;
  width: 61px;
  padding-bottom: 2px;
  text-align: center;
}
.top-actions {
  display: flex;
  align-items: center;
  padding-right: 25px;
}
.top-actions .icon-btn {
  width: 60px;
}
.top-actions .icon-btn:last-child {
  width: 50px;
}
.user {
  display: flex;
  align-items: center;
  gap: 9px;
  padding: 0 6px 0 9px;
}
.avatar {
  width: 46px;
  height: 46px;
}
.user-text {
  display: flex;
  flex-direction: column;
  font-size: 16px;
  font-weight: 300;
  line-height: 24px;
}
.role {
  opacity: 0.6;
}

/* side menu */
.sidebar {
  background: var(--green);
  color: #fff;
  overflow: hidden;
}
.item {
  display: flex;
  align-items: center;
  height: 51px;
  padding: 0 19px 2px 20px;
  border-top: 1px solid rgba(0, 0, 0, 0.15);
  font-size: 18px;
  font-weight: 500;
}
.item:last-child {
  height: 52px;
  border-bottom: 1px solid rgba(0, 0, 0, 0.15);
}
.item.active {
  background: #007b6e;
}
.item-icon {
  width: 23px;
  height: 23px;
  margin-right: 9px;
}
.item-label {
  flex: 1;
}
.item-chevron {
  width: 22px;
  height: 22px;
}
.new {
  align-self: flex-start;
  margin: 6px -8px 0 0;
  padding: 0 8px;
  border-radius: 13px;
  background: #fff;
  color: var(--green);
  font-size: 16px;
  line-height: 26px;
  font-weight: 600;
}

/* dashboard */
.dashboard {
  display: flex;
  flex-direction: column;
  min-width: 0;
  background: #ebebeb;
}
.title-bar {
  position: relative;
  z-index: 1;
  display: flex;
  flex-direction: column;
  flex: none;
  height: 76px;
  padding: 4px 0 0 25px;
  background: #ebebeb;
}
.title-bar label {
  font-size: 16px;
  line-height: 20px;
  color: rgba(0, 0, 0, 0.6);
}
.title-bar input {
  width: 100%;
  height: 48px;
  font-size: 38px;
  font-weight: 500;
  outline: none;
}
.widget {
  display: flex;
  flex-direction: column;
  flex: 1;
  min-height: 0;
  margin-left: 12px;
  padding: 10px 0 0 10px;
  border: 1px solid #039be5;
  border-width: 1px 0 0 1px;
  background: #fff;
  box-shadow: 0 0 14px 4px #039be5;
}
.widget h2 {
  font-size: 20px;
  font-weight: 400;
  line-height: 30px;
  margin-bottom: 10px;
  color: #000;
}
.map {
  position: relative;
  flex: 1;
  min-height: 0;
  overflow: hidden;
}
.map-art {
  position: absolute;
  width: 100%;
  height: 100%;
}
.map-text {
  font-family: 'Noto Sans', sans-serif;
  font-size: 32px;
  fill: #333;
  stroke: #e6e4e4;
  stroke-width: 5px;
  paint-order: stroke;
}
.club {
  font-style: italic;
  font-weight: 500;
  fill: #146c3f;
  stroke: none;
}
.rail {
  fill: #777;
}
.map-controls {
  position: absolute;
  top: 13px;
  left: 14px;
  display: flex;
  flex-direction: column;
  gap: 14px;
  color: #666;
}
.zoom {
  display: flex;
  flex-direction: column;
  width: 38px;
  height: 76px;
  border-radius: 19px;
  background: #fff;
  box-shadow: 0 0 0 1px #666, 0 3px 8px rgba(0, 0, 0, 0.5);
}
.zoom button {
  display: grid;
  place-items: center;
  flex: 1;
}
.zoom svg {
  width: 16px;
  height: 16px;
  stroke: #666;
  stroke-width: 2px;
}
.layers {
  display: grid;
  place-items: center;
  width: 38px;
  height: 38px;
  border-radius: 50%;
  background: #fff;
  box-shadow: 0 0 0 1px #666, 0 3px 8px rgba(0, 0, 0, 0.5);
}
.layers svg {
  width: 22px;
  height: 20px;
}

/* details drawer */
.drawer {
  display: flex;
  flex-direction: column;
  min-width: 0;
  background: #fff;
}
.drawer-head {
  display: flex;
  align-items: center;
  height: 125px;
  padding: 0 25px 0 30px;
  background: var(--green);
  color: #fff;
}
.drawer-head h2 {
  flex: 1;
  align-self: flex-start;
  margin-top: 27px;
  font-size: 25px;
  line-height: 30px;
}
.drawer-head .segmented {
  margin-right: 25px;
}
.drawer-head .icon-btn + .icon-btn {
  margin-left: 10px;
}
.segmented {
  display: flex;
  align-items: center;
  height: 40px;
  padding: 0 3px;
  border-radius: 20px;
  font-size: 18px;
}
.segmented button {
  height: 34px;
  padding: 0 15px 2px;
  border-radius: 17px;
}
.segmented .on {
  padding: 0 15px;
  font-weight: 500;
}
.dark {
  background: rgba(0, 0, 0, 0.06);
  color: rgba(255, 255, 255, 0.7);
}
.dark .on {
  background: #fff;
  color: var(--green);
  font-weight: 600;
}
.light {
  background: #f2f2f2;
  color: #9e9e9e;
}
.light .on {
  padding: 0 14px;
  background: #fbfbfb;
  border: 1px solid var(--green);
  color: var(--green);
  font-weight: 600;
}
.drawer-tools {
  display: flex;
  align-items: center;
  justify-content: flex-end;
  flex: none;
  height: 85px;
  gap: 15px;
  padding: 30px 30px 10px;
}
.btn {
  display: flex;
  align-items: center;
  justify-content: center;
  height: 45px;
  padding: 0 17px;
  gap: 9px;
  border-radius: 5px;
  font-size: 18px;
  font-weight: 500;
  color: var(--green);
}
.btn.plain {
  padding: 0 10px;
  gap: 7px;
}
.btn.outline {
  border: 1px solid rgba(0, 0, 0, 0.12);
}
.btn.filled {
  background: var(--green);
  color: #fff;
}
.drawer-body {
  position: relative;
  display: flex;
  flex-direction: column;
  gap: 20px;
  flex: 1;
  min-height: 0;
  padding: 0 27px 0 20px;
  overflow: hidden;
}
.card {
  display: flex;
  flex-direction: column;
  flex: none;
  padding: 20px;
  border-radius: 5px;
  background: #fff;
  box-shadow: 0 0 12px 8px rgba(11, 17, 51, 0.04);
}
.layers-card {
  margin-top: -60px;
  padding-bottom: 85px;
}
.layer-row {
  display: flex;
  align-items: center;
  padding: 45px 0 15px 400px;
  border: 1px solid rgba(0, 0, 0, 0.12);
  border-radius: 8px;
}
.select {
  position: relative;
  flex: 1;
  margin-right: 15px;
}
.select select {
  display: block;
  width: 100%;
  height: 51px;
  padding: 0 0 2px 219px;
  border: 1px solid rgba(0, 0, 0, 0.12);
  border-radius: 5px;
  appearance: none;
  font-size: 18px;
}
.select svg {
  position: absolute;
  top: 10px;
  right: 6px;
  color: #666;
}
.overlays-card {
  padding-bottom: 86px;
  align-items: stretch;
}
.overlays-card .segmented {
  align-self: flex-end;
  margin-bottom: 20px;
}
.grid-table {
  width: 100%;
  table-layout: fixed;
  border-collapse: separate;
  border-spacing: 0;
  border: 1px solid rgba(0, 0, 0, 0.12);
  border-radius: 8px;
}
.key-col {
  width: 248px;
}
.act-col {
  width: 131px;
}
th {
  height: 60px;
  padding: 0 0 2px 27px;
  border-bottom: 1px solid rgba(0, 0, 0, 0.12);
  text-align: left;
  font-size: 18px;
  font-weight: 400;
  color: rgba(0, 0, 0, 0.6);
}
td {
  height: 81px;
  padding: 0;
}
.key {
  padding: 0 0 0 15px;
  vertical-align: top;
}
.key-field {
  height: 66px;
  padding: 16px 15px 0 6px;
  border-bottom: 1px solid rgba(0, 0, 0, 0.2);
}
.key-chip {
  display: flex;
  align-items: center;
  justify-content: flex-end;
  height: 40px;
  padding-right: 16px;
  border-radius: 20px;
  background: #e2dcdc;
}
.key-chip.short {
  margin-right: 5px;
}
.key-chip svg {
  width: 18px;
  height: 18px;
  color: #444;
}
.row-actions {
  display: flex;
  padding-left: 16px;
}
.sources-card {
  padding-top: 64px;
}
.empty {
  height: 79px;
  padding-bottom: 4px;
  text-align: center;
  font-size: 23px;
  color: rgba(0, 0, 0, 0.38);
}
.add {
  align-self: flex-start;
  margin-top: 21px;
}
.drawer-thumb {
  position: absolute;
  top: 91px;
  right: 0;
  width: 7px;
  height: 201px;
  background: #d1d1d1;
}

/* dialog */
.backdrop {
  position: fixed;
  inset: 0;
  z-index: 10;
  display: grid;
  place-items: center;
  background: rgba(0, 0, 0, 0.32);
}
.dialog {
  position: relative;
  display: flex;
  flex-direction: column;
  width: 938px;
  max-width: 90vw;
  height: 848px;
  max-height: 90vh;
  border-radius: 5px;
  background: #fff;
  box-shadow: 0 14px 19px -9px rgba(0, 0, 0, 0.2), 0 30px 47px 4px rgba(0, 0, 0, 0.14),
    0 11px 57px 10px rgba(0, 0, 0, 0.12);
}
.dialog-head {
  display: flex;
  align-items: center;
  justify-content: space-between;
  flex: none;
  height: 80px;
  padding: 0 15px 0 20px;
  border-radius: 5px 5px 0 0;
  background: var(--green);
  color: #fff;
}
.dialog-head h1 {
  font-size: 25px;
  line-height: 30px;
}
.dialog-body {
  position: relative;
  flex: 1;
  min-height: 0;
  overflow: hidden;
}
.dialog-cards {
  display: flex;
  flex-direction: column;
  gap: 20px;
  margin: -28px 37px 0 30px;
}
.dialog h3 {
  display: flex;
  align-items: center;
  gap: 11px;
  font-size: 20px;
  line-height: 30px;
  margin-bottom: 20px;
}
.info {
  width: 23px;
  height: 23px;
  color: #e0e0e0;
}
.row {
  display: flex;
  align-items: center;
  height: 70px;
  padding: 0 9px 0 20px;
  border: 1px solid rgba(0, 0, 0, 0.12);
  border-radius: 6px;
  font-size: 20px;
}
.row + .row {
  margin-top: 20px;
}
.row-label {
  white-space: nowrap;
}
.click-row {
  height: 69px;
  padding-bottom: 2px;
}
.click-row .info {
  margin-left: 11px;
}
.action {
  display: flex;
  align-items: center;
  justify-content: space-between;
  width: 530px;
  height: 50px;
  margin-left: auto;
  padding: 0 24px 0 19px;
  border: 1px solid rgba(0, 0, 0, 0.12);
  border-radius: 5px;
  font-size: 18px;
  font-weight: 500;
  color: var(--green);
}
.action svg {
  width: 26px;
  height: 26px;
}
.groups {
  width: 100%;
  height: 70px;
  padding: 0 19px;
  border: 1px solid rgba(0, 0, 0, 0.12);
  border-radius: 5px;
  font-size: 20px;
  outline: none;
}
.groups::placeholder {
  color: #757575;
  opacity: 1;
}
.card.marked,
.row.marked {
  box-shadow: 0 0 0 3px var(--mark), 0 0 10px 4px rgba(255, 180, 90, 0.45),
    inset 0 0 8px rgba(255, 180, 90, 0.35);
}
.chips {
  display: flex;
  gap: 10px;
  margin-left: auto;
}
.chip {
  display: flex;
  align-items: center;
  height: 40px;
  padding: 0 15px 2px;
  border-radius: 20px;
  background: #e0e0e0;
  font-size: 18px;
}
.chip.on {
  background: var(--green);
  color: #fff;
}
.chip svg {
  width: 24px;
  height: 24px;
  margin: 2px 12px 0 -2px;
}
.scope-row {
  height: 60px;
  padding-bottom: 2px;
}
.scope {
  margin-left: auto;
  background: #f0f0f0;
  color: #9e9e9e;
}
.scope .on {
  background: var(--green);
  color: #fff;
}
.snap-row {
  font-size: 21px;
}
.snap-row .info {
  margin-left: 9px;
}
.switch {
  position: relative;
  flex: none;
  width: 45px;
  height: 25px;
  margin-right: 20px;
  appearance: none;
}
.switch::before {
  content: '';
  position: absolute;
  inset: 4px 0 4px 1px;
  border-radius: 9px;
  background: #e0e0e0;
}
.switch::after {
  content: '';
  position: absolute;
  top: 0;
  left: 0;
  width: 25px;
  height: 25px;
  border-radius: 50%;
  background: linear-gradient(#fff, #fff) center / 15px 2px no-repeat #5f5f5f;
  box-shadow: 0 1px 3px rgba(0, 0, 0, 0.3);
}
.switch:checked::after {
  left: 20px;
  background-color: var(--green);
}
.next {
  height: 80px;
}
.dialog-thumb {
  position: absolute;
  right: 0;
  bottom: 20px;
  width: 7px;
  height: 173px;
  background: #d4d4d2;
}
.dialog-foot {
  display: flex;
  align-items: center;
  justify-content: space-between;
  flex: none;
  height: 66px;
  padding: 0 10px 0 12px;
}
.dialog-foot .save {
  width: 80px;
  box-shadow: 0 3px 5px rgba(0, 0, 0, 0.3);
}

/* tutorial notes above the dialog */
.notes {
  position: absolute;
  inset: 0;
  pointer-events: none;
}
.notes-art {
  width: 100%;
  height: 100%;
  overflow: visible;
}
.callout {
  position: absolute;
  left: 935px;
  height: 42px;
  padding: 0 6px 0 5px;
  border: 3px solid var(--mark);
  border-radius: 8px;
  background: #fff0dc;
  box-shadow: 0 0 6px rgba(255, 170, 60, 0.7);
  font-family: 'Liberation Sans', sans-serif;
  font-size: 28px;
  line-height: 38px;
  white-space: nowrap;
  color: #000;
}
.callout.first {
  top: 498px;
}
.callout.second {
  top: 583px;
}
</style>
